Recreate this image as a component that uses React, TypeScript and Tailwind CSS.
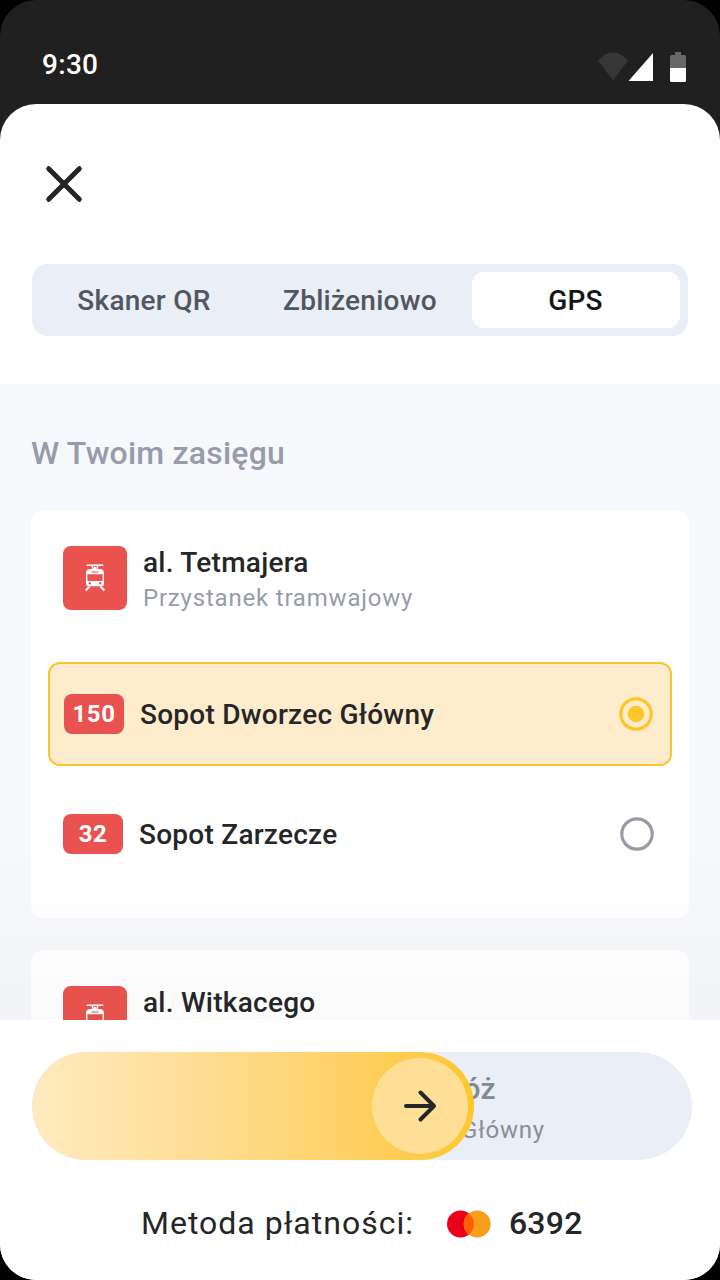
const TABS = ["Skaner QR", "Zbliżeniowo", "GPS"];

const LINES = [
  { number: "150", direction: "Sopot Dworzec Główny", selected: true },
  { number: "32", direction: "Sopot Zarzecze", selected: false },
];

const TramIcon = () => (
  <svg width="24" height="32" viewBox="0 0 24 32" fill="none" stroke="#fff">
    <path d="M3.7 3.2h16.6" strokeWidth="1.5" />
    <path d="M9.2 3.5l1 4.2M14.8 3.5l-1 4.2" strokeWidth="1.5" />
    <circle cx="12" cy="5.9" r="1.2" fill="#fff" stroke="none" />
    <path d="M3 11.5c0-3 1.6-4.4 4.1-4.4h9.8c2.5 0 4.1 1.400 4.1 4.400v10.400a2.300 2.300 0 0 1-2.300 2.300H5.300a2.300 2.300 0 0 1-2.300-2.300z" fill="#fff" stroke="none" />
    <path d="M4.400 12.200h15.200v6.900H4.400zM8.500 9.600h7v.9h-7z" fill="#E9524E" stroke="none" />
    <circle cx="6.800" cy="21.300" r="1.200" fill="#E9524E" stroke="none" />
    <circle cx="17.200" cy="21.300" r="1.200" fill="#E9524E" stroke="none" />
    <path d="M6.600 24.500l-4 4M17.400 24.500l4 4" strokeWidth="2" />
  </svg>
);

const StatusBar = () => (
  <div className="flex h-[104px] items-start justify-between pl-[42px] pr-[34px] text-white">
    <span className="mt-[49px] text-[28px] leading-8 font-medium tracking-[0.3px]">9:30</span>
    <svg className="mt-[50px]" width="88" height="34" viewBox="0 0 88 34">
      <path d="M0 10.500Q15 -5.500 30 10.500L15 30.500Z" fill="#363636" />
      <path d="M30.500 31L55 3v28z" fill="#fff" />
      <path d="M77 2h6v3h3.500q1.500 0 1.500 1.500V18H72V6.500Q72 5 73.500 5H77z" fill="#686868" />
      <path d="M72 18h16v12.500q0 1.500-1.500 1.500h-13q-1.500 0-1.500-1.500z" fill="#fff" />
    </svg>
  </div>
);

const StopHeader = ({ name, kind }: { name: string; kind: string }) => (
  <div className="flex h-16 gap-4 px-8">
    <div className="flex h-16 w-16 shrink-0 items-center justify-center rounded-lg bg-[#E9524E]">
      <TramIcon />
    </div>
    <div className="pt-px">
      <h3 className="text-[28px] leading-8 font-medium tracking-[0.25px] text-[#252628]">{name}</h3>
      <p className="mt-[3px] text-2xl leading-8 tracking-[0.8px] text-[#979CA8]">{kind}</p>
    </div>
  </div>
);

const LineRow = ({ number, direction, selected }: (typeof LINES)[number]) => (
  <div
    className={
      selected
        ? "mx-[17px] flex h-[104px] items-center rounded-xl border-2 border-[#F9C62F] bg-[#FEECCC] pl-3.5 pr-[17px]"
        : "flex h-[136px] items-center pl-8 pr-[35px]"
    }
  >
    <span className="flex h-10 w-[60px] items-center justify-center rounded-lg bg-[#E9524E] text-2xl font-bold tracking-[0.6px] text-white">
      {number}
    </span>
    <span className="ml-4 flex-1 pt-0.5 text-[28px] leading-8 font-medium tracking-[0.25px] text-[#252628]">
      {direction}
    </span>
    <svg width="34" height="34" viewBox="0 0 34 34" fill="none">
      <circle cx="17" cy="17" r="15.200" stroke={selected ? "#FFC629" : "#979CA8"} strokeWidth="3.200" />
      {selected && <circle cx="17" cy="17" r="8.300" fill="#FFC629" />}
    </svg>
  </div>
);

const SlideToStart = () => (
  <div className="relative mx-7 ml-8 h-[108px] overflow-hidden rounded-full bg-[#EAEEF6]">
    <div className="flex h-full w-[513px] flex-col items-end pt-[19px]">
      <p className="mr-[49px] text-[30px] leading-9 font-medium tracking-[0.3px] text-[#85888D]">podróż</p>
      <p className="mt-[7px] text-2xl leading-8 tracking-[0.8px] text-[#8B8E95]">Sopot Dworzec Główny</p>
    </div>
    {/* thumb and the track filled so far */}
    <div className="absolute inset-y-0 left-0 flex w-[442px] items-center justify-end rounded-full bg-gradient-to-r from-[#FFEAC0] to-[#FFC629] pr-1.5">
      <div className="flex h-24 w-24 items-center justify-center rounded-full bg-[#FFDF95]">
        <svg width="34" height="34" viewBox="0 0 34 34" fill="none" stroke="#252628" strokeWidth="4" strokeLinecap="round" strokeLinejoin="round">
          <path d="M3 17h28M17.500 3.500L31 17L17.500 30.500" />
        </svg>
      </div>
    </div>
  </div>
);

const App = () => (
  <div className="h-[1280px] w-[720px] bg-black font-[Roboto,sans-serif]">
    <div className="flex h-full flex-col overflow-hidden rounded-[36px] bg-[#202020]">
      <StatusBar />
      <div className="flex min-h-0 flex-1 flex-col overflow-hidden rounded-t-[36px] bg-white">
        <header className="h-[280px] shrink-0 px-8 pt-[60px]">
          <button className="ml-3 flex h-10 w-10 items-center justify-center">
            <svg width="40" height="40" viewBox="0 0 40 40" stroke="#252628" strokeWidth="5" strokeLinecap="round">
              <path d="M4.700 4.700l30.600 30.600M35.300 4.700l-30.600 30.600" />
            </svg>
          </button>
          <div className="mt-[60px] grid h-[72px] grid-cols-3 gap-2 rounded-2xl bg-[#EAEEF6] p-2">
            {TABS.map((tab) => (
              <button
                key={tab}
                className={
                  tab === "GPS"
                    ? "rounded-xl bg-white pt-0.5 pr-px text-[28px] font-medium tracking-[0.25px] text-[#151515]"
                    : "pt-0.5 text-[28px] font-medium tracking-[0.25px] text-[#525661]"
                }
              >
                {tab}
              </button>
            ))}
          </div>
        </header>

        <main className="relative h-[636px] shrink-0 overflow-hidden bg-[#F6F8FC] px-[31px] pt-[49px]">
          <h2 className="text-[32px] leading-10 font-medium tracking-[0.2px] text-[#979CA8]">W Twoim zasięgu</h2>
          <section className="mt-[37px] h-[408px] rounded-xl bg-white pt-9">
            <StopHeader name="al. Tetmajera" kind="Przystanek tramwajowy" />
            <div className="mt-[52px]">
              {LINES.map((line) => (
                <LineRow key={line.number} {...line} />
              ))}
            </div>
          </section>
          <section className="mt-8 h-[408px] rounded-xl bg-white pt-9">
            <StopHeader name="al. Witkacego" kind="" />
          </section>
          {/* soft shade above the bottom bar */}
          <div className="pointer-events-none absolute inset-x-0 bottom-0 h-[180px] bg-gradient-to-b from-black/0 to-black/[0.018]" />
        </main>

        <footer className="flex-1 bg-white pt-8">
          <SlideToStart />
          <div className="mt-[43px] flex items-center pl-[141px] text-[#252628]">
            <span className="text-[32px] leading-10 tracking-[1px]">Metoda płatności:</span>
            <svg className="mt-0.5 ml-[33px]" width="44" height="28" viewBox="0 0 44 28">
              <circle cx="13.500" cy="14" r="13.500" fill="#EB001B" />
              <circle cx="30.200" cy="14" r="13.500" fill="#F79E1B" />
              <path d="M21.850 3.400a13.500 13.500 0 0 1 0 21.200a13.500 13.500 0 0 1 0-21.200z" fill="#FF5F00" />
            </svg>
            <span className="ml-[18px] text-[32px] leading-10 font-medium tracking-[0.25px]">6392</span>
          </div>
        </footer>
      </div>
    </div>
  </div>
);

export default App;
